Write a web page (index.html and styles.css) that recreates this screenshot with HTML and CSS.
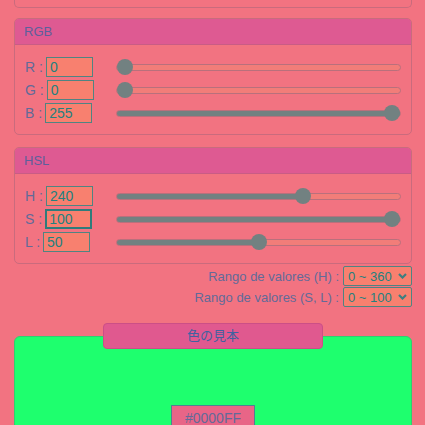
FILE: index.html
```html
<!DOCTYPE html>
<html lang="es">
<head>
    <meta charset="UTF-8">
    <meta name="viewport" content="width=device-width, initial-scale=1.0">
    <title>Selector de color</title>
    <link rel="stylesheet" href="styles.css">
</head>
<body>

<div class="panel tail"></div>

<div class="panel">
    <div class="panel-head">RGB</div>
    <div class="panel-body">
        <div class="row">
            <label for="r">R :</label>
            <input type="text" id="r" value="0">
            <input type="range" class="slider" min="0" max="255" value="0" style="--p:0%">
        </div>
        <div class="row">
            <label for="g">G :</label>
            <input type="text" id="g" value="0">
            <input type="range" class="slider" min="0" max="255" value="0" style="--p:0%">
        </div>
        <div class="row">
            <label for="b">B :</label>
            <input type="text" id="b" value="255">
            <input type="range" class="slider" min="0" max="255" value="255" style="--p:100%">
        </div>
    </div>
</div>

<div class="panel hsl">
    <div class="panel-head">HSL</div>
    <div class="panel-body">
        <div class="row">
            <label for="h">H :</label>
            <input type="text" id="h" value="240">
            <input type="range" class="slider" min="0" max="360" value="240" style="--p:66.7%">
        </div>
        <div class="row">
            <label for="s">S :</label>
            <input type="text" id="s" value="100" class="focus">
            <input type="range" class="slider" min="0" max="100" value="100" style="--p:100%">
        </div>
        <div class="row">
            <label for="l">L :</label>
            <input type="text" id="l" value="50">
            <input type="range" class="slider" min="0" max="100" value="50" style="--p:50%">
        </div>
    </div>
</div>

<div class="range-row">
    <label for="rangeH">Rango de valores (H) :</label>
    <span class="select-wrap">
        <select id="rangeH"><option>0 ~ 360</option><option>0 ~ 1</option></select>
        <svg class="chev" width="9" height="6" viewBox="0 0 9 6"><path d="M1 1 L4.5 4.5 L8 1" fill="none" stroke="#3d7f80" stroke-width="2.2"/></svg>
    </span>
</div>
<div class="range-row">
    <label for="rangeSL">Rango de valores (S, L) :</label>
    <span class="select-wrap">
        <select id="rangeSL"><option>0 ~ 100</option><option>0 ~ 1</option></select>
        <svg class="chev" width="9" height="6" viewBox="0 0 9 6"><path d="M1 1 L4.5 4.5 L8 1" fill="none" stroke="#3d7f80" stroke-width="2.2"/></svg>
    </span>
</div>

<div class="sample">
    <div class="sample-title">色の見本</div>
    <div class="sample-box">
        <div class="hex">#0000FF</div>
    </div>
</div>

</body>
</html>
```

FILE: styles.css
```css
body {
    margin: 0;
    padding: 0 13px 0 14px;
    background: #f27381;
    font-family: "Liberation Sans", Arial, "Noto Sans CJK JP", sans-serif;
    color: #626a99;
}
.panel {
    border: 1px solid #c96b7d;
    border-radius: 5px;
    margin-bottom: 12px;
    overflow: hidden;
}
.panel.tail {
    height: 7px;
    border-top: none;
    border-radius: 0 0 5px 5px;
    margin-bottom: 10px;
}
.panel.hsl {
    margin-bottom: 2px;
}
.panel-head {
    background: #de5a92;
    border-bottom: 1px solid #c95c85;
    font-size: 13px;
    line-height: 16px;
    padding: 5px 9px 4px;
    color: #5d5f9c;
}
.panel-body {
    padding: 12px 10px 11px 10px;
}
.row {
    display: flex;
    align-items: center;
    height: 20px;
    margin-bottom: 3px;
}
.row:last-child {
    margin-bottom: 0;
}
.row label {
    font-size: 14px;
    margin-right: 3px;
}
.row input[type="text"] {
    width: 47px;
    height: 20px;
    box-sizing: border-box;
    padding: 0 3px;
    border: 1px solid #4f8482;
    background: #f8806f;
    color: #23807f;
    font-family: inherit;
    font-size: 14px;
    outline: none;
}
.row input.focus {
    border: 2px solid #2f7c7b;
    padding: 0 2px;
}
.slider {
    -webkit-appearance: none;
    appearance: none;
    margin: 0 0 0 auto;
    width: 285px;
    height: 16px;
    background: transparent;
}
.slider::-webkit-slider-runnable-track {
    height: 7px;
    border-radius: 4px;
    box-sizing: border-box;
    border: 1px solid #b9707c;
    background: linear-gradient(to right, #728181 var(--p), #f27d79 var(--p));
}
.slider::-webkit-slider-thumb {
    -webkit-appearance: none;
    width: 16px;
    height: 16px;
    border-radius: 50%;
    background: #728181;
    margin-top: -5.5px;
}
.range-row {
    display: flex;
    justify-content: flex-end;
    align-items: center;
    font-size: 13px;
    height: 20px;
    margin-bottom: 1px;
}
.range-row label {
    margin-right: 4px;
}
.select-wrap {
    position: relative;
    display: inline-block;
    height: 20px;
}
.select-wrap select {
    -webkit-appearance: none;
    appearance: none;
    display: block;
    width: 69px;
    height: 20px;
    padding: 0 0 0 4px;
    border: 1px solid #4f8482;
    border-radius: 2px;
    background: #f8806f;
    color: #23807f;
    font-family: inherit;
    font-size: 13px;
}
.chev {
    position: absolute;
    right: 5px;
    top: 7px;
    pointer-events: none;
}
.sample {
    margin-top: 16px;
}
.sample-title {
    position: relative;
    z-index: 1;
    width: 218px;
    margin: 0 auto -13px;
    height: 24px;
    line-height: 24px;
    text-align: center;
    background: #e0598f;
    border: 1px solid #cc4f86;
    border-radius: 4px;
    font-size: 13px;
    color: #3f62a0;
}
.sample-box {
    height: 120px;
    background: #1eff6e;
    border: 1px solid #2fcf70;
    border-radius: 6px;
    padding-top: 68px;
    box-sizing: border-box;
}
.hex {
    width: 82px;
    margin: 0 auto;
    height: 24px;
    line-height: 24px;
    text-align: center;
    background: #e86587;
    border: 1px solid #4f8091;
    font-size: 14px;
    color: #636a99;
}
```
